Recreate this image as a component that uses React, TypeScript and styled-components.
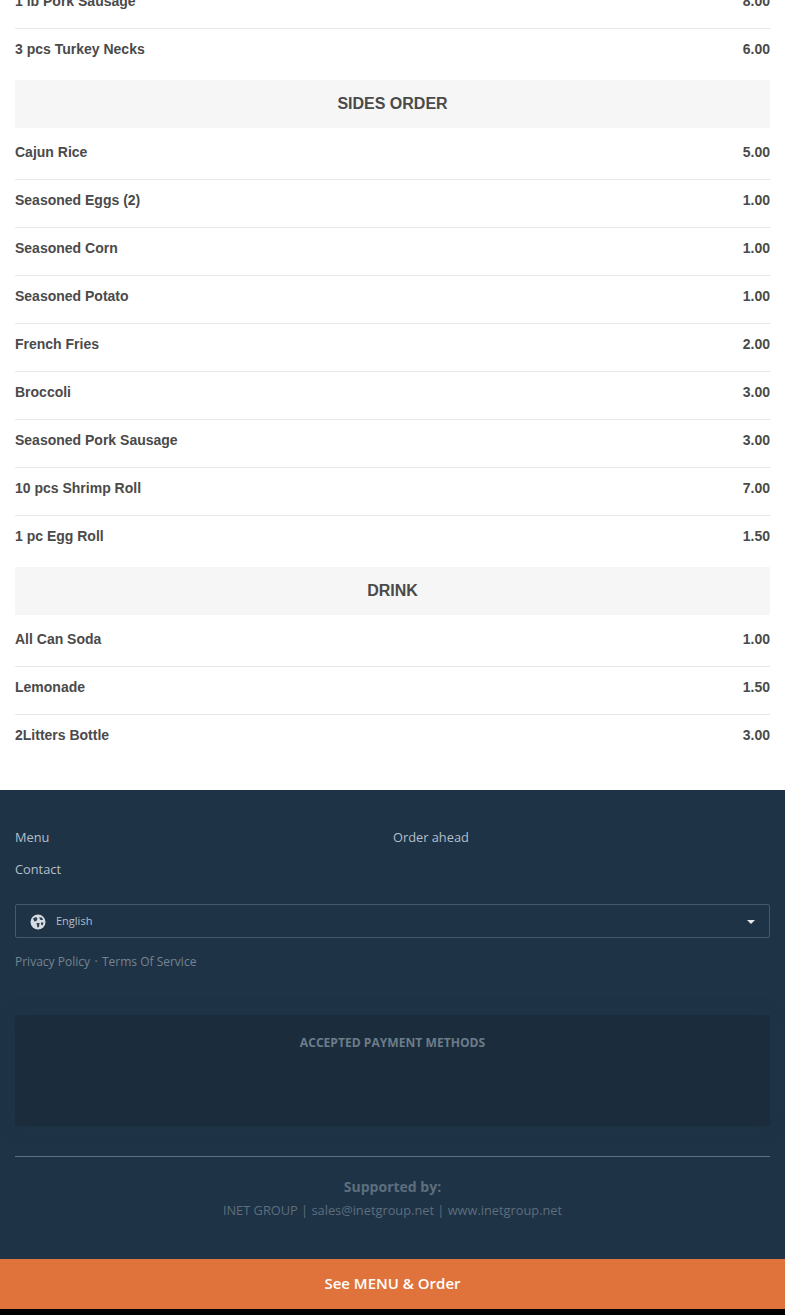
import React from "react";
import styled, { createGlobalStyle } from "styled-components";

const Global = createGlobalStyle`
  html, body { margin: 0; padding: 0; background: #000; overflow: hidden; height: 1315px; }
  body { font-family: "Open Sans", sans-serif; }
  * { box-sizing: border-box; }
`;

const Page = styled.div`
  width: 785px;
  height: 1315px;
  overflow: hidden;
  display: flex;
  flex-direction: column;
  background: #000;
`;

const Menu = styled.main`
  flex: none;
  background: #fff;
  padding: 0 15px 28px;
  margin-top: -19px;
  font-family: "Liberation Sans", Arial, sans-serif;
`;

const Row = styled.div`
  display: flex;
  justify-content: space-between;
  height: 48px;
  padding-top: 10px;
  line-height: 20px;
  font-size: 14px;
  font-weight: 700;
  color: #4a4a4a;
  border-bottom: 1px solid #e7e7e7;
  &:last-child { border-bottom: 0; height: 47px; }
`;

const Section = styled.section`
  & + & { margin-top: 4px; }
`;

const SectionTitle = styled.h2`
  margin: 0 0 4px;
  height: 48px;
  line-height: 47px;
  background: #f6f6f6;
  text-align: center;
  font-size: 16px;
  font-weight: 700;
  color: #4a4a4a;
`;

const Footer = styled.footer`
  flex: none;
  height: 469px;
  background: #1f3347;
  padding: 31px 15px 0;
  display: flex;
  flex-direction: column;
`;

const Links = styled.nav`
  display: grid;
  grid-template-columns: 378px 1fr;
  grid-auto-rows: 32px;
  font-size: 12.8px;
  line-height: 32px;
  color: #b5bfc8;
`;

const LangSelect = styled.div`
  margin-top: 19px;
  height: 34px;
  border: 1px solid #45596b;
  border-radius: 2px;
  display: flex;
  align-items: center;
  padding: 0 14px;
  font-size: 11px;
  color: #b5bfc8;
`;

const LangLabel = styled.span`
  margin-left: 10px;
  margin-bottom: 1px;
  flex: 1;
`;

const GlobeIcon = styled.svg`
  width: 16px;
  height: 16px;
  margin-top: 2px;
`;

const Caret = styled.span`
  width: 0;
  height: 0;
  border-left: 4px solid transparent;
  border-right: 4px solid transparent;
  border-top: 4px solid #e4e8ec;
  margin-top: 2px;
`;

const Legal = styled.div`
  margin-top: 15px;
  font-size: 12px;
  line-height: 18px;
  color: #75858f;
  display: flex;
  align-items: center;
`;

const LegalDot = styled.span`
  width: 12px;
  text-align: center;
`;

const Payments = styled.div`
  margin-top: 44px;
  height: 111px;
  background: #1b2c3c;
  box-shadow: 0 0 12px rgba(30, 52, 66, 0.9);
  padding-top: 19px;
  text-align: center;
  font-size: 12.1px;
  font-weight: 700;
  line-height: 18px;
  color: #6d7c89;
`;

const Support = styled.div`
  margin-top: 30px;
  border-top: 1px solid #5f7182;
  padding-top: 20px;
  text-align: center;
  color: #5d6e7d;
`;

const SupportTitle = styled.div`
  font-size: 14px;
  font-weight: 700;
  line-height: 20px;
`;

const SupportLine = styled.div`
  margin-top: 3px;
  font-size: 12.8px;
  line-height: 20px;
`;

const OrderBar = styled.div`
  flex: none;
  height: 50px;
  background: #e0733b;
  color: #fff;
  text-align: center;
  font-size: 15px;
  font-weight: 600;
  line-height: 49px;
`;

const Globe = () => (
  <GlobeIcon viewBox="0 0 16 16" aria-hidden="true">
    <circle cx="8" cy="8" r="7.500" fill="#d5dbe1" />
    <path d="M3 4.500 6 3l1.500 1.500L6.500 7 4.500 7.500Z" fill="#2a3e51" />
    <path d="M9 3.500 12 3.500 13 6 10.500 6Z" fill="#2a3e51" />
    <path d="M6.500 9 9.500 9 9 13 7.500 13.500Z" fill="#2a3e51" />
    <path d="M11 8.500 13.500 8.500 12.500 11.500 11 10.500Z" fill="#2a3e51" />
  </GlobeIcon>
);

type Item = [string, string];

const meats: Item[] = [
  ["1 lb Pork Sausage", "8.00"],
  ["3 pcs Turkey Necks", "6.00"],
];
const sides: Item[] = [
  ["Cajun Rice", "5.00"],
  ["Seasoned Eggs (2)", "1.00"],
  ["Seasoned Corn", "1.00"],
  ["Seasoned Potato", "1.00"],
  ["French Fries", "2.00"],
  ["Broccoli", "3.00"],
  ["Seasoned Pork Sausage", "3.00"],
  ["10 pcs Shrimp Roll", "7.00"],
  ["1 pc Egg Roll", "1.50"],
];
const drinks: Item[] = [
  ["All Can Soda", "1.00"],
  ["Lemonade", "1.50"],
  ["2Litters Bottle", "3.00"],
];

const Rows = ({ items }: { items: Item[] }) => (
  <div>
    {items.map(([name, price]) => (
      <Row key={name}>
        <span>{name}</span>
        <span>{price}</span>
      </Row>
    ))}
  </div>
);

export default function App() {
  return (
    <Page>
      <Global />
      <Menu>
        <Section>
          <Rows items={meats} />
        </Section>
        <Section>
          <SectionTitle>SIDES ORDER</SectionTitle>
          <Rows items={sides} />
        </Section>
        <Section>
          <SectionTitle>DRINK</SectionTitle>
          <Rows items={drinks} />
        </Section>
      </Menu>
      <Footer>
        <Links>
          <span>Menu</span>
          <span>Order ahead</span>
          <span>Contact</span>
        </Links>
        <LangSelect>
          <Globe />
          <LangLabel>English</LangLabel>
          <Caret />
        </LangSelect>
        <Legal>
          <span>Privacy Policy</span>
          <LegalDot>·</LegalDot>
          <span>Terms Of Service</span>
        </Legal>
        <Payments>ACCEPTED PAYMENT METHODS</Payments>
        <Support>
          <SupportTitle>Supported by:</SupportTitle>
          <SupportLine>INET GROUP | sales@inetgroup.net | www.inetgroup.net</SupportLine>
        </Support>
      </Footer>
      <OrderBar>See MENU &amp; Order</OrderBar>
    </Page>
  );
}
